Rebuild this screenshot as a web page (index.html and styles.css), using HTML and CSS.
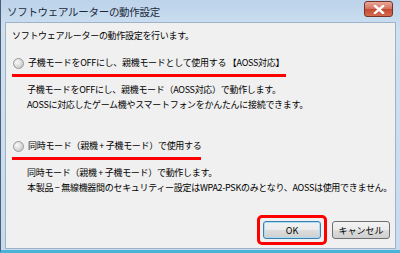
FILE: index.html
```html
<!DOCTYPE html>
<html lang="ja">
<head>
    <meta charset="UTF-8">
    <title>ソフトウェアルーターの動作設定</title>
    <link rel="stylesheet" href="styles.css">
</head>
<body>
    <div class="window">
        <!-- Title bar -->
        <div class="titlebar">
            <span class="title">ソフトウェアルーターの動作設定</span>
            <span class="close-btn">
                <svg width="12" height="9" viewBox="0 0 12 9">
                    <path d="M2 1 L10 8 M10 1 L2 8" stroke="#fff" stroke-width="2.4" stroke-linecap="square"/>
                </svg>
            </span>
        </div>

        <!-- Dialog body -->
        <div class="content">
            <p class="intro">ソフトウェアルーターの動作設定を行います。</p>

            <div class="option">
                <label class="choice mark-long">
                    <span class="radio"></span>
                    子機モードをOFFにし、親機モードとして使用する 【AOSS対応】
                </label>
                <p class="desc">子機モードをOFFにし、親機モード（AOSS対応）で動作します。<br>AOSSに対応したゲーム機やスマートフォンをかんたんに接続できます。</p>
            </div>

            <div class="option second">
                <label class="choice mark-short">
                    <span class="radio"></span>
                    同時モード（親機 + 子機モード）で使用する
                </label>
                <p class="desc">同時モード（親機 + 子機モード）で動作します。<br>本製品 − 無線機器間のセキュリティー設定はWPA2-PSKのみとなり、AOSSは使用できません。</p>
            </div>

            <div class="buttons">
                <span class="highlight"><button class="btn default">OK</button></span>
                <button class="btn">キャンセル</button>
            </div>
        </div>
    </div>
</body>
</html>
```

FILE: styles.css
```css
/* General Styles */
body {
    margin: 0;
    font-family: "Noto Sans CJK JP", "Noto Sans", sans-serif;
    font-size: 9px;
    color: #000;
}

p {
    margin: 0;
}

/* Window frame */
.window {
    width: 400px;
    height: 253px;
    box-sizing: border-box;
    display: flex;
    flex-direction: column;
    background: linear-gradient(to bottom, #bcd3ea, #cfe0f1 30px, #c8dbee);
    border-left: 1px solid #4b5e73;
    border-bottom: 3px solid #4ab4d8;
}

.titlebar {
    height: 22px;
    display: flex;
    align-items: center;
    justify-content: space-between;
    padding: 0 7px 0 6px;
}

.title {
    font-size: 10.5px;
    color: #1b2a3a;
    letter-spacing: -0.3px;
}

.close-btn {
    width: 27px;
    height: 14px;
    margin-top: -4px;
    display: flex;
    align-items: center;
    justify-content: center;
    border: 1px solid #7a3127;
    border-radius: 3px;
    background: linear-gradient(to bottom, #e9a99a, #d2705b 50%, #c34a33 51%, #d46a4f);
}

/* Dialog body */
.content {
    flex: 1;
    margin: 0 4px 1px 4px;
    background: #f0f0f0;
    border: 1px solid #9fb3c8;
    padding: 6px 0 0 6px;
    display: flex;
    flex-direction: column;
}

.intro {
    line-height: 14px;
    letter-spacing: -0.3px;
}

.option {
    margin-top: 13px;
}

.option.second {
    margin-top: 27px;
}

.choice {
    display: inline-flex;
    align-items: center;
    gap: 4px;
    padding: 0 0 4px 1px;
    line-height: 14px;
    letter-spacing: -0.3px;
    border-bottom: 3px solid #f00;
}

.mark-long {
    padding-right: 2px;
}

.mark-short {
    padding-right: 0;
}

.radio {
    width: 9px;
    height: 9px;
    border-radius: 50%;
    border: 1px solid #9a9a9a;
    background: radial-gradient(circle at 35% 35%, #fafafa, #cfcfcf 70%, #bdbdbd);
}

.desc {
    margin: 6px 0 0 15px;
    line-height: 14.5px;
    letter-spacing: -0.3px;
}

/* Buttons */
.buttons {
    margin-top: auto;
    margin-bottom: 3px;
    display: flex;
    justify-content: flex-end;
    align-items: center;
    gap: 5px;
    padding-right: 5px;
}

.highlight {
    display: flex;
    padding: 3px 3px;
    border: 3px solid #f00;
    border-radius: 5px;
}

.btn {
    width: 58px;
    height: 18px;
    padding: 0;
    font-family: inherit;
    font-size: 9px;
    color: #000;
    border: 1px solid #707070;
    border-radius: 3px;
    background: linear-gradient(to bottom, #f2f2f2, #ebebeb 50%, #dddddd 51%, #cfcfcf);
}

.btn.default {
    border-color: #3c7fb1;
    box-shadow: inset 0 0 0 1px #a8dcf4;
}
```
